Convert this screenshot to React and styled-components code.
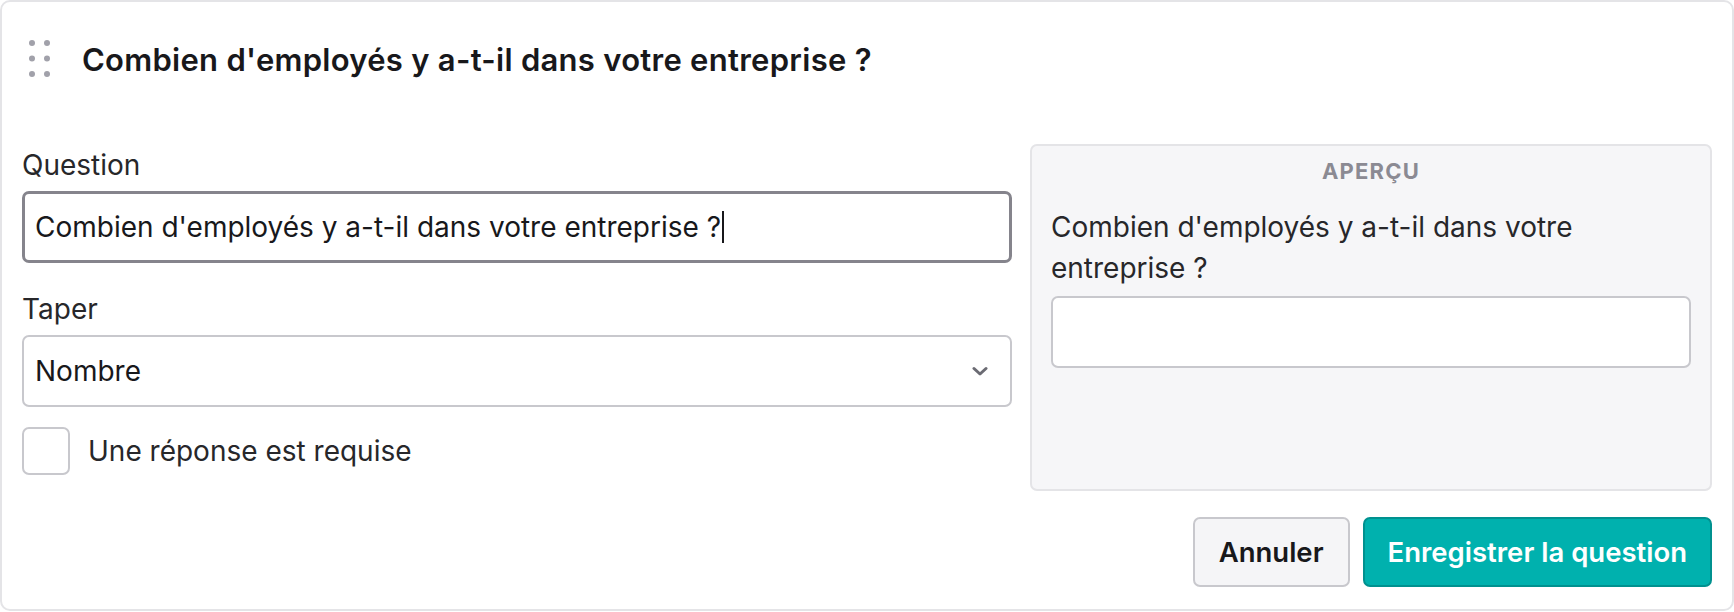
import React from "react";
import styled, { createGlobalStyle } from "styled-components";

const GlobalStyle = createGlobalStyle`
  body {
    margin: 0;
    background: #ffffff;
    font-family: Inter, "Noto Sans", sans-serif;
    color: #18181b;
  }
`;

const Card = styled.div`
  box-sizing: border-box;
  width: 1734px;
  height: 611px;
  border: 2px solid #e4e4e7;
  border-radius: 10px;
  background: #ffffff;
  padding: 0 20px 22px 20px;
  display: flex;
  flex-direction: column;
`;

const Header = styled.div`
  height: 142px;
  display: flex;
  align-items: center;
  gap: 31px;
  padding-bottom: 28px;
  box-sizing: border-box;
  padding-left: 7px;
`;

const Title = styled.h2`
  margin: 0;
  font-size: 31px;
  font-weight: 600;
  letter-spacing: 0.28px;
  color: #18181b;
`;

const Body = styled.div`
  display: grid;
  grid-template-columns: 990px 1fr;
  gap: 18px;
`;

const Column = styled.div`
  display: flex;
  flex-direction: column;
`;

const Label = styled.label`
  font-size: 28px;
  line-height: 36px;
  color: #27272a;
  margin: 3px 0 8px;
`;

const TextInput = styled.div`
  box-sizing: border-box;
  height: 72px;
  border: ${(p) => (p.$focused ? "3px solid #85848c" : "2px solid #c8c8cd")};
  border-radius: 7px;
  background: #ffffff;
  display: flex;
  align-items: center;
  padding: 0 ${(p) => (p.$focused ? "10px" : "11px")};
  font-size: 28px;
  color: #18181b;
  margin-bottom: ${(p) => p.$gap || 0}px;
`;

const Caret = styled.span`
  display: inline-block;
  width: 2px;
  height: 32px;
  background: #18181b;
  margin-left: 1px;
`;

const Chevron = styled.svg`
  margin-left: auto;
  margin-right: 11px;
`;

const CheckRow = styled.div`
  display: flex;
  align-items: center;
  gap: 18px;
  margin-top: 3px;
  font-size: 28px;
  color: #27272a;
`;

const Checkbox = styled.span`
  box-sizing: border-box;
  width: 48px;
  height: 48px;
  border: 2px solid #c8c8cd;
  border-radius: 7px;
  background: #ffffff;
`;

const Preview = styled.div`
  box-sizing: border-box;
  height: 347px;
  background: #f6f6f8;
  border: 2px solid #e4e4e7;
  border-radius: 7px;
  padding: 8px 19px;
  display: flex;
  flex-direction: column;
`;

const PreviewTitle = styled.div`
  text-align: center;
  font-size: 22px;
  font-weight: 700;
  letter-spacing: 1.2px;
  color: #8b8a93;
  line-height: 34px;
  margin-bottom: 19px;
`;

const PreviewQuestion = styled.div`
  font-size: 28px;
  line-height: 41px;
  color: #27272a;
  margin-bottom: 7px;
`;

const Footer = styled.div`
  margin-top: auto;
  display: flex;
  justify-content: flex-end;
  gap: 13px;
`;

const Button = styled.button`
  box-sizing: border-box;
  height: 70px;
  padding: 0 ${(p) => (p.$primary ? "23px" : "24px")};
  border-radius: 7px;
  font-family: inherit;
  font-size: 27.5px;
  font-weight: 600;
  border: 2px solid ${(p) => (p.$primary ? "#00918f" : "#c8c8cd")};
  background: ${(p) => (p.$primary ? "#00b1ae" : "#f5f5f7")};
  color: ${(p) => (p.$primary ? "#ffffff" : "#18181b")};
`;

const DragHandle = () => (
  <svg width="22" height="40" viewBox="0 0 22 40">
    {[0, 1, 2].map((r) =>
      [0, 1].map((c) => (
        <circle key={`${r}-${c}`} cx={3 + c * 15} cy={4 + r * 15.5} r="3" fill="#a1a1aa" />
      ))
    )}
  </svg>
);

const question = "Combien d'employés y a-t-il dans votre entreprise ?";

const App = () => {
  return (
    <>
      <GlobalStyle />
      <Card>
        <Header>
          <DragHandle />
          <Title>{question}</Title>
        </Header>
        <Body>
          <Column>
            <Label>Question</Label>
            <TextInput $focused $gap={25}>
              {question}
              <Caret />
            </TextInput>
            <Label>Taper</Label>
            <TextInput $gap={17}>
              Nombre
              <Chevron width="16" height="11" viewBox="0 0 16 11">
                <path d="M2 2.5 L8 8 L14 2.5" fill="none" stroke="#6b6b73" strokeWidth="3" strokeLinecap="round" strokeLinejoin="round" />
              </Chevron>
            </TextInput>
            <CheckRow>
              <Checkbox />
              Une réponse est requise
            </CheckRow>
          </Column>
          <Preview>
            <PreviewTitle>APERÇU</PreviewTitle>
            <PreviewQuestion>{question}</PreviewQuestion>
            <TextInput />
          </Preview>
        </Body>
        <Footer>
          <Button>Annuler</Button>
          <Button $primary>Enregistrer la question</Button>
        </Footer>
      </Card>
    </>
  );
};

export default App;
